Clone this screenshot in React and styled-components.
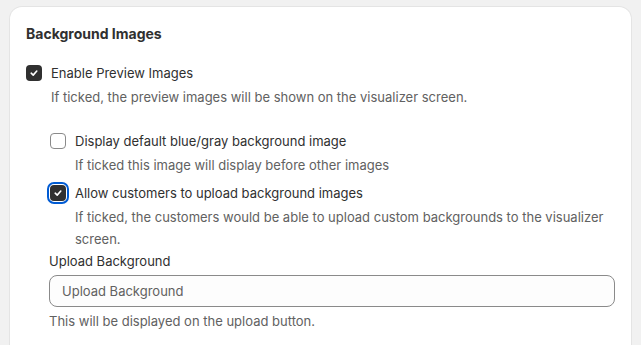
import React from "react";
import styled, { createGlobalStyle } from "styled-components";

const GlobalStyle = createGlobalStyle`
  html, body {
    margin: 0;
    padding: 0;
    background: #f1f1f1;
    font-family: Inter, "Noto Sans", sans-serif;
    color: #303030;
    font-size: 13px;
    line-height: 20px;
  }
`;

const Page = styled.div`
  padding: 7px 10px 0 10px;
`;

const Card = styled.div`
  background: #ffffff;
  border-radius: 12px;
  box-shadow: 0 0 0 1px rgba(0, 0, 0, 0.05), 0 1px 0 rgba(26, 26, 26, 0.07);
  padding: 17px 16px 20px 16px;
  min-height: 360px;
  box-sizing: border-box;
`;

const Title = styled.h2`
  margin: 0 0 19px 0;
  font-size: 14px;
  font-weight: 650;
  line-height: 20px;
`;

const Option = styled.div`
  display: grid;
  grid-template-columns: 16px 1fr;
  column-gap: 9px;
  align-items: center;
  margin-bottom: ${(p) => p.$gap || 0}px;
`;

const Box = styled.span`
  position: relative;
  width: 16px;
  height: 16px;
  box-sizing: border-box;
  border-radius: 4px;
  border: ${(p) => (p.$checked ? "none" : "1px solid #8a8a8a")};
  background: ${(p) => (p.$checked ? "#303030" : "#fff")};
  display: flex;
  align-items: center;
  justify-content: center;
  outline: ${(p) => (p.$focused ? "2px solid #005bd3" : "none")};
  outline-offset: 1px;
`;

const Label = styled.span`
  font-size: 13px;
`;

const Help = styled.p`
  grid-column: 2;
  margin: 3px 0 0 0;
  color: #616161;
  font-size: 13px;
  line-height: 22px;
`;

const Nested = styled.div`
  margin-top: 23px;
  padding-left: 24px;
`;

const FieldLabel = styled.div`
  margin-top: 1px;
  margin-left: -1px;
  margin-bottom: 4px;
`;

const Input = styled.div`
  margin-left: -1px;
  height: 32px;
  box-sizing: border-box;
  border: 1px solid #8a8a8a;
  border-radius: 8px;
  background: #fdfdfd;
  padding: 0 12px;
  display: flex;
  align-items: center;
  color: #616161;
`;

const FieldHelp = styled.div`
  margin-top: 4px;
  margin-left: -1px;
  color: #616161;
`;

const Check = () => (
  <svg width="10" height="10" viewBox="0 0 10 10" fill="none">
    <path d="M2.2 5.2 L4.2 7.1 L7.8 3" stroke="#fff" strokeWidth="1.6" strokeLinecap="round" strokeLinejoin="round" />
  </svg>
);

const CheckOption = ({ checked, focused, label, help, gap }) => (
  <Option $gap={gap}>
    <Box $checked={checked} $focused={focused}>{checked && <Check />}</Box>
    <Label>{label}</Label>
    {help && <Help>{help}</Help>}
  </Option>
);

export default function App() {
  return (
    <Page>
      <GlobalStyle />
      <Card>
        <Title>Background Images</Title>
        <CheckOption
          checked
          label="Enable Preview Images"
          help="If ticked, the preview images will be shown on the visualizer screen."
        />
        <Nested>
          <CheckOption
            label="Display default blue/gray background image"
            help="If ticked this image will display before other images"
            gap={7}
          />
          <CheckOption
            checked
            focused
            label="Allow customers to upload background images"
            help="If ticked, the customers would be able to upload custom backgrounds to the visualizer screen."
          />
          <FieldLabel>Upload Background</FieldLabel>
          <Input>Upload Background</Input>
          <FieldHelp>This will be displayed on the upload button.</FieldHelp>
        </Nested>
      </Card>
    </Page>
  );
}
